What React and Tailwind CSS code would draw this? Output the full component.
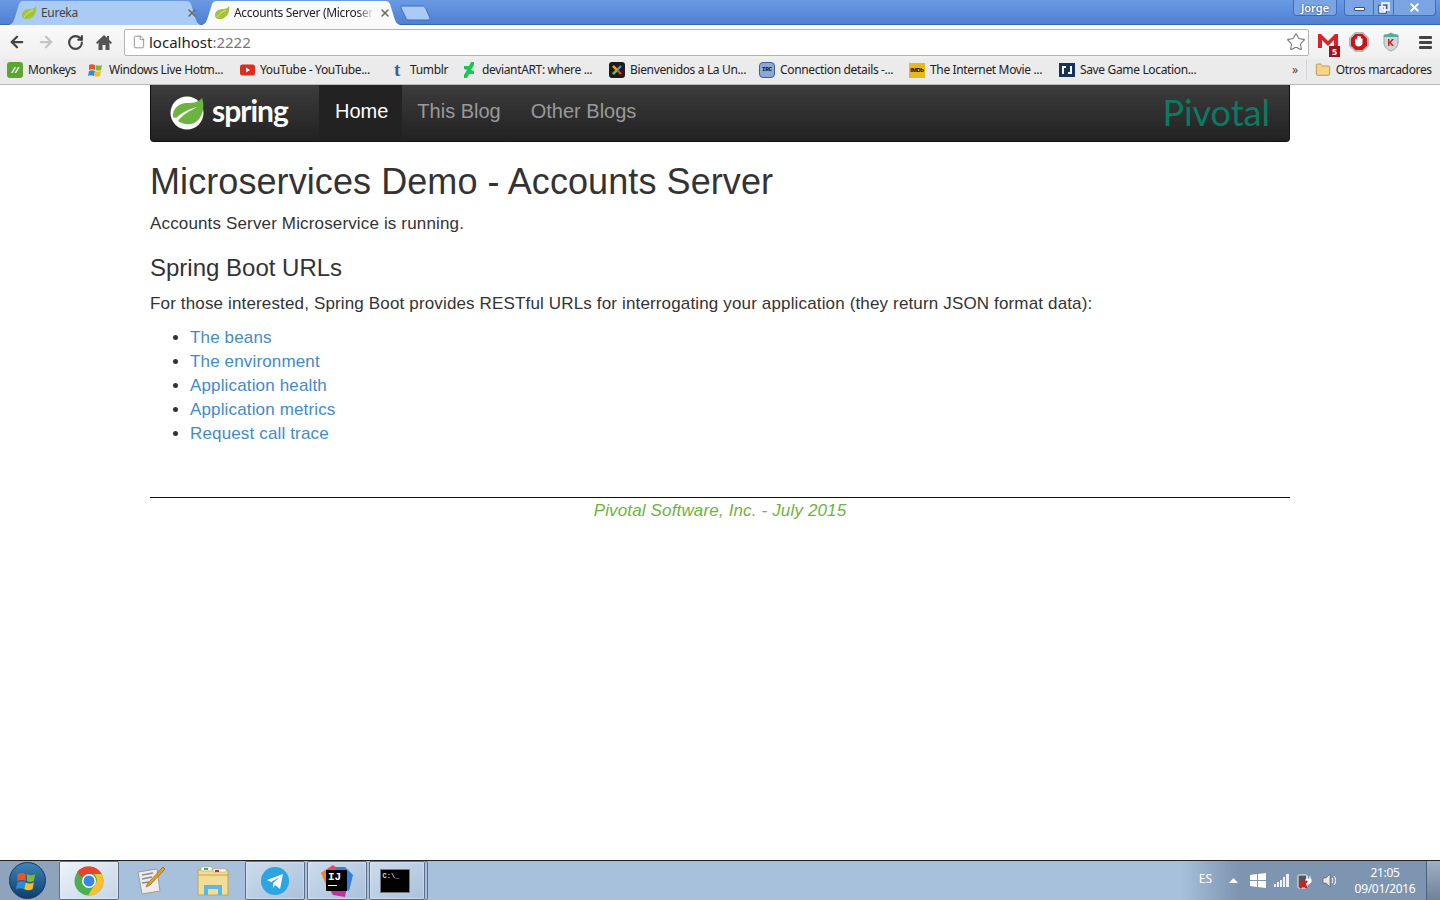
import React from "react";
import { ArrowLeft, ArrowRight, RotateCw, File, Star, X, Folder } from "lucide-react";

const UI = "font-['Noto_Sans','Open_Sans',sans-serif]";

const Leaf = ({ size = 14 }) => (
  <svg width={size + 2} height={size} viewBox="0 0 16 14" className="shrink-0">
    <path d="M1 9C1 5 5 3 9 3c3 0 5-1 6-3 1 5-1 10-5 12-3 2-6 1-8 0C1 11 1 10 1 9z" fill="#a3c43a" />
    <path d="M3 11c2-3 5-5 9-7" stroke="#d9e58a" strokeWidth="1" fill="none" />
  </svg>
);

const TabShape = ({ fill, w }) => (
  <svg className="absolute left-0 top-0" width={w} height="25" viewBox={`0 0 ${w} 25`}>
    <path d={`M0 25c5 0 6-2 8-8l4-13c1-2 2-3 5-3h${w - 34}c3 0 4 1 5 3l4 13c2 6 3 8 8 8z`} fill={fill} />
  </svg>
);

const Tab = ({ active, title, w, className }) => (
  <div className={`relative h-[25px] shrink-0 ${className}`} style={{ width: w }}>
    <TabShape w={w} fill={active ? "#fafafa" : "#a9cbf4"} />
    <div className={`relative flex h-full items-center pl-[14px] text-[12px] tracking-[-0.3px] ${active ? "pr-[11px] text-[#222]" : "pr-[5px] text-[#444]"}`}>
      <Leaf />
      <span className={`ml-[4px] w-[140px] overflow-hidden whitespace-nowrap ${active ? "[mask-image:linear-gradient(to_right,black_88%,transparent)]" : ""}`}>{title}</span>
      <X size={12} strokeWidth={3} className="ml-auto text-[#666]" />
    </div>
  </div>
);

const WinLogo = ({ size = 16 }) => (
  <svg width={size} height={size} viewBox="0 0 16 16">
    <path d="M1 3c2-1 4-1 6 0v5C5 7 3 7 1 8z" fill="#e8552a" />
    <path d="M8 3c2 1 4 1 6 0l-1 5c-2 1-4 1-5 0z" fill="#7fba2b" />
    <path d="M1 9c2-1 4-1 6 0l-1 5c-2-1-4-1-6 0z" fill="#2a8cdb" />
    <path d="M7 9c2 1 4 1 6 0l-1 5c-2 1-4 1-6 0z" fill="#f5c01f" />
  </svg>
);

const marks = {
  monkeys: <div className="flex h-4 w-4 items-center justify-center rounded-[3px] bg-[#5aa631] text-[9px] font-bold italic text-white">//</div>,
  windows: <WinLogo />,
  youtube: (
    <svg width="15" height="12" viewBox="0 0 15 12">
      <rect width="15" height="11" y="0.5" rx="2.5" fill="#e22b1f" />
      <path d="M6 3.5l4 2.5-4 2.5z" fill="#fff" />
    </svg>
  ),
  tumblr: <span className="font-['Liberation_Serif',serif] text-[19px] font-bold leading-4 text-[#38648c]">t</span>,
  deviant: (
    <svg width="11" height="16" viewBox="0 0 11 16">
      <path d="M10 0v3L7 8l3 1v3H5l-2 4H0v-3l3-5-3-1V4h5l2-4z" fill="#18c653" />
    </svg>
  ),
  joomla: (
    <svg width="16" height="16" viewBox="0 0 16 16">
      <rect width="16" height="16" rx="3" fill="#1c1c1c" />
      <path d="M4 4l8 8" stroke="#e8402a" strokeWidth="2.4" />
      <path d="M12 4l-8 8" stroke="#3f9ad6" strokeWidth="2.4" />
      <path d="M4 4l4 4" stroke="#f0a21e" strokeWidth="2.4" />
      <path d="M4 12l4-4" stroke="#7cb82f" strokeWidth="2.4" />
    </svg>
  ),
  irc: <div className="flex h-4 w-4 items-center justify-center rounded-[4px] border border-[#3c5f94] bg-[#8da9d2] font-['Liberation_Mono',monospace] text-[6px] font-bold leading-none text-[#111]">IRC</div>,
  imdb: <div className="flex h-[15px] w-4 items-center justify-center bg-[#e6b91e] font-['Liberation_Sans',sans-serif] text-[6px] font-bold text-black">IMDb</div>,
  save: (
    <svg width="16" height="14" viewBox="0 0 16 14">
      <rect width="16" height="14" fill="#16345c" />
      <path d="M5 3H3v8h2zM11 3h2v8h-2zM5 3h2v2H5zM9 9h2v2H9z" fill="#fff" />
    </svg>
  ),
};

const bookmarks = [
  ["monkeys", "Monkeys", "w-[83px] pl-[7px]"],
  ["windows", "Windows Live Hotm...", "w-[151px]"],
  ["youtube", "YouTube - YouTube...", "w-[150px]"],
  ["tumblr", "Tumblr", "w-[72px]"],
  ["deviant", "deviantART: where ...", "w-[148px]"],
  ["joomla", "Bienvenidos a La Un...", "w-[150px]"],
  ["irc", "Connection details -...", "w-[150px]"],
  ["imdb", "The Internet Movie ...", "w-[150px]"],
  ["save", "Save Game Location...", "w-[150px]"],
];

const links = ["The beans", "The environment", "Application health", "Application metrics", "Request call trace"];

const TaskButton = ({ active, focused, children, className = "" }) => (
  <div className={`flex h-[39px] w-[60px] items-center justify-center ${active ? "rounded-[2px] border border-[#5b6f88] bg-gradient-to-br shadow-[inset_0_0_2px_#fff]" : ""} ${focused ? "from-[#eef3f9] to-[#c5d5e8]" : "from-[#cddbeb] to-[#a9c2de]"} ${className}`}>
    {children}
  </div>
);

export default function App() {
  return (
    <div className={`flex h-screen w-[1440px] flex-col overflow-hidden bg-white ${UI}`}>
      {/* Tab strip */}
      <div className="flex h-[25px] shrink-0 items-start justify-between border-b border-[#3b66ae] bg-gradient-to-b from-[#6a9ae3] to-[#4f80d2]">
        <div className="flex pl-[7px]">
          <Tab title="Eureka" w={196} />
          <Tab active title="Accounts Server (Microser" w={202} className="-ml-[3px]" />
          <svg width="34" height="25" viewBox="0 0 34 25" className="-ml-[3px] shrink-0">
            <path d="M3 6h21c1 0 2 1 3 3l4 9c0 1 0 2-2 2H10c-2 0-3-1-3-2L2 8c0-1 0-2 1-2z" fill="#a9cbf4" stroke="#3f6db8" />
          </svg>
        </div>
        <div className="flex items-start pr-[4px] text-white">
          <div className="flex h-[16px] w-[44px] items-center justify-center rounded-b-[4px] border border-t-0 border-[#3f6db8] bg-[#7ba4e4] pt-[2px] text-[11px] font-semibold [text-shadow:0_0_2px_#234]">Jorge</div>
          <div className="ml-[7px] flex h-[16px] rounded-b-[4px] border border-t-0 border-[#3f6db8] bg-[#7ba4e4]">
            <div className="flex w-[29px] items-center justify-center border-r border-[#3f6db8]">
              <div className="mt-[3px] h-[4px] w-[11px] rounded-[1px] border border-[#33507f] bg-white" />
            </div>
            <div className="flex w-[20px] items-center justify-center border-r border-[#3f6db8]">
              <svg width="12" height="12" viewBox="0 0 12 12" fill="none" stroke="#fff" strokeWidth="1.5">
                <rect x="1" y="3.5" width="7" height="7.5" stroke="#33507f" />
                <rect x="4" y="1" width="7" height="7" />
                <rect x="2" y="4.5" width="5" height="5.5" />
              </svg>
            </div>
            <div className="flex w-[41px] items-center justify-center">
              <X size={13} strokeWidth={3.5} className="text-white" />
            </div>
          </div>
        </div>
      </div>

      {/* Toolbar */}
      <div className="flex h-[34px] shrink-0 items-center bg-gradient-to-b from-[#fafafa] to-[#efefef] pl-[8px]">
        <ArrowLeft size={18} strokeWidth={3} className="text-[#444]" />
        <ArrowRight size={18} strokeWidth={3} className="ml-[11px] text-[#c4c4c4]" />
        <RotateCw size={17} strokeWidth={3} className="ml-[12px] text-[#444]" />
        <svg width="16" height="17" viewBox="0 0 16 17" className="ml-[12px]">
          <path d="M8 1L0 8.500l1 1.500 1.500-1.300V16H6.500v-5h3v5h4V8.700L15 10l1-1.500-3-2.800V2h-2v1.800z" fill="#555" />
        </svg>
        <div className="ml-[12px] flex h-[27px] w-[1185px] items-center rounded-[2px] border border-[#b4b4b4] bg-white pl-[7px] pr-[2px]">
          <File size={14} strokeWidth={1.5} className="text-[#888]" />
          <span className="ml-[3px] text-[15px] text-[#222]">localhost<span className="text-[#777]">:2222</span></span>
          <Star size={20} strokeWidth={1.3} className="ml-auto text-[#777]" />
        </div>
        <div className="relative ml-[9px] h-[20px] w-[22px]">
          <svg width="20" height="16" viewBox="0 0 20 16" className="mt-[2px]">
            <path d="M0 0h3l7 7 7-7h3v14h-4V6l-6 6-6-6v8H0z" fill="#d8232a" />
          </svg>
          <div className="absolute -bottom-[5px] right-0 flex h-[11px] w-[11px] items-center justify-center bg-[#a3121a] text-[9px] font-bold leading-none text-white">5</div>
        </div>
        <svg width="20" height="20" viewBox="0 0 20 20" className="ml-[9px]">
          <path d="M6 0h8l6 6v8l-6 6H6l-6-6V6z" fill="#b8b8b8" />
          <path d="M6.500 2h7L18 6.500v7L13.500 18h-7L2 13.500v-7z" fill="#c8141c" />
          <path d="M6 9c0-2 1-3 1.500-2L8 8V5c0-1 1-1 1 0V4.500c0-1 1.500-1 1.500 0V5c0-1 1.500-1 1.500 0v2c0-1 1.500-1 1.500 0v4c0 2-2 3.500-4 3.500S6 13 6 11z" fill="#fff" />
        </svg>
        <svg width="16" height="20" viewBox="0 0 16 20" className="ml-[14px]">
          <path d="M1 3c3 0 5-1 7-2 2 1 4 2 7 2v8c0 4-4 7-7 8-3-1-7-4-7-8z" fill="#d2d6da" stroke="#8fa7ad" />
          <path d="M1 3c3 0 5-1 7-2 2 1 4 2 7 2v2H1z" fill="#4fb09a" />
          <path d="M5 7h1.500v3L9 7h2l-3 3.500L11 14H9l-2.500-3v3H5z" fill="#c8232a" />
        </svg>
        <div className="ml-[20px] flex w-[13px] flex-col gap-[2px]">
          <div className="h-[3px] rounded-[1px] bg-[#444]" />
          <div className="h-[3px] rounded-[1px] bg-[#444]" />
          <div className="h-[3px] rounded-[1px] bg-[#444]" />
        </div>
      </div>

      {/* Bookmarks bar */}
      <div className="flex h-[26px] shrink-0 items-center border-b border-[#b9b9b9] bg-[#ebebeb] pb-[3px] text-[12px] tracking-[-0.35px] text-[#222]">
        {bookmarks.map(([key, label, width]) => (
          <div key={key} className={`flex shrink-0 items-center gap-[5px] whitespace-nowrap pl-[5px] ${width}`}>
            <span className="flex w-4 shrink-0 justify-center">{marks[key]}</span>
            <span>{label}</span>
          </div>
        ))}
        <span className="ml-[88px] text-[12px] text-[#444]">»</span>
        <div className="ml-[8px] h-[20px] w-px bg-[#d4d4d4]" />
        <Folder size={16} fill="#f4d58a" strokeWidth={1.2} className="ml-[8px] text-[#b08a3c]" />
        <span className="ml-[5px] whitespace-nowrap">Otros marcadores</span>
      </div>

      {/* Page */}
      <main className="min-h-0 flex-1 px-[150px] font-['Liberation_Sans',Arial,sans-serif] text-[17px] tracking-[0.15px] text-[#333]">
        <nav className="flex h-[57px] items-stretch rounded-b-[4px] border border-t-0 border-[#111] bg-gradient-to-b from-[#3c3c3c] to-[#222] tracking-normal">
          <div className="ml-[19px] flex w-[149px] items-center">
            <svg width="36" height="34" viewBox="0 0 36 34" className="shrink-0">
              <circle cx="17" cy="17" r="16.500" fill="#fff" />
              <path d="M3 21C2 13 9 7 17 7c7 0 12-1 15-5 3 8 1 19-6 24-6 4-14 2-18-1 5-7 12-10 19-14-7 2-15 5-21 11-2-1-3 0-3-1z" fill="#6db33f" />
            </svg>
            <span className="ml-[6px] pb-[6px] font-['Lato',sans-serif] text-[30px] leading-none font-bold tracking-[-1px] text-white">spring</span>
          </div>
          <div className="flex items-center bg-[#222] pb-[4px] pl-[16px] pr-[14px] text-[20px] text-white">Home</div>
          <div className="flex items-center px-[15px] pb-[4px] text-[20px] text-[#999]">This Blog</div>
          <div className="flex items-center px-[15px] pb-[4px] text-[20px] text-[#999]">Other Blogs</div>
          <div className="ml-auto flex items-center pb-[2px] pr-[19px] font-['Lato',sans-serif] text-[36px] leading-none text-[#0a7a62]">Pivotal</div>
        </nav>

        <h1 className="mt-[16px] text-[36px] leading-[48px] tracking-[0.08px] text-[#333]">Microservices Demo - Accounts Server</h1>
        <p className="mt-[6px] leading-[24px]">Accounts Server Microservice is running.</p>
        <h3 className="mt-[16px] text-[24px] leading-[32px] tracking-normal">Spring Boot URLs</h3>
        <p className="mt-[8px] leading-[24px]">For those interested, Spring Boot provides RESTful URLs for interrogating your application (they return JSON format data):</p>
        <ul className="mt-[10px] list-disc pl-[40px]">
          {links.map((l) => (
            <li key={l} className="leading-[24px]"><span className="text-[#428bca]">{l}</span></li>
          ))}
        </ul>
        <div className="mt-[51px] border-t border-[#111] pt-[1px] text-center italic leading-[24px] text-[#6db33f]">Pivotal Software, Inc. - July 2015</div>
      </main>

      {/* Taskbar */}
      <div className="flex h-[40px] shrink-0 items-stretch border-t border-[#222] bg-[#a7c0dc] bg-gradient-to-r from-[#a7c0dc] from-[82%] to-[#7d95b0] to-[86%]">
        <div className="flex w-[59px] items-center justify-center bg-[#8ea4bd] pr-[5px]">
          <div className="flex h-[37px] w-[37px] items-center justify-center rounded-full border border-[#16385c] bg-gradient-to-b from-[#3e84b8] to-[#0e3f6f]">
            <WinLogo size={22} />
          </div>
        </div>
        <TaskButton active focused>
          <svg width="30" height="30" viewBox="0 0 30 30">
            <circle cx="15" cy="15" r="14.500" fill="#4caf50" />
            <path d="M15 .5A14.500 14.500 0 0 1 27.500 8H15a7 7 0 0 0-6.500 4L3 6A14.500 14.500 0 0 1 15 .5z" fill="#e8432e" />
            <path d="M27.500 8A14.500 14.500 0 0 1 14 29.500L20.500 19A7 7 0 0 0 20 8z" fill="#fbc02d" />
            <circle cx="15" cy="15" r="7" fill="#fff" />
            <circle cx="15" cy="15" r="5.500" fill="#3f83e8" />
          </svg>
        </TaskButton>
        <TaskButton className="ml-[2px]">
          <svg width="30" height="30" viewBox="0 0 30 30">
            <path d="M2 6l19-3 3 22-18 3z" fill="#ececec" stroke="#a09c8c" />
            <path d="M6 9l11-2M6 13l10-2M6 17l7-1" stroke="#8c8c8c" strokeWidth="1.500" />
            <path d="M27 1l2 2-15 16-4 2 2-4z" fill="#e8a21f" stroke="#8a5a12" strokeWidth=".7" />
          </svg>
        </TaskButton>
        <TaskButton className="ml-[2px]">
          <svg width="32" height="30" viewBox="0 0 32 30">
            <path d="M1 4h30v25H1z" fill="#f2dd94" stroke="#c2a457" />
            <path d="M4 1h11v4H4zM16 3h13v3H16z" fill="#fff" stroke="#c2a457" strokeWidth=".6" />
            <path d="M7 2h4v2H7z" fill="#4aa84a" />
            <path d="M18 4h4v2h-4z" fill="#c8332c" />
            <path d="M1 9h30" stroke="#c2a457" />
            <path d="M7 29V19h18v10h-4v-6H11v6z" fill="#5cb6e6" />
          </svg>
        </TaskButton>
        <TaskButton active className="ml-[2px]">
          <svg width="28" height="28" viewBox="0 0 28 28">
            <circle cx="14" cy="14" r="14" fill="#2ca5e0" />
            <path d="M6 13l16-6-3 15-5-4-2 3v-5l7-6-9 5z" fill="#fff" />
          </svg>
        </TaskButton>
        <TaskButton active className="ml-[2px]">
          <div className="relative h-[32px] w-[32px]">
            <svg width="32" height="32" viewBox="0 0 32 32">
              <path d="M0 8L12 0l8 6-8 10z" fill="#f0416c" />
              <path d="M14 2h10l8 8-4 16-14-6z" fill="#2d7fe0" />
              <path d="M2 12l10 18 12 2 2-10L8 6z" fill="#c42ea0" />
              <path d="M0 8l6-4 6 14-6 4z" fill="#fc801d" />
            </svg>
            <div className="absolute left-[5px] top-[5px] flex h-[21px] w-[21px] flex-col bg-black pl-[2px] pt-[1px] font-['Liberation_Mono',monospace] text-[11px] font-bold leading-[12px] text-white">
              IJ
              <div className="mt-[2px] h-[1px] w-[9px] bg-white" />
            </div>
          </div>
        </TaskButton>
        <TaskButton active className="ml-[2px] !w-[56px] pr-[5px]">
          <div className="h-[24px] w-[30px] border border-[#777] bg-black pl-[2px] pt-[2px] font-['Liberation_Mono',monospace] text-[7px] font-bold leading-[8px] text-[#ddd]">C:\_</div>
        </TaskButton>
        <div className="h-[39px] w-[3px] rounded-r-[2px] border border-l-0 border-[#5b6f88]" />

        <div className="ml-auto flex items-center text-[12px] text-white">
          <span className="mb-[3px]">ES</span>
          <svg width="9" height="5" viewBox="0 0 9 5" className="ml-[17px]"><path d="M4.500 0L9 5H0z" fill="#fff" /></svg>
          <svg width="16" height="15" viewBox="0 0 16 15" className="ml-[12px]" fill="#fff"><path d="M0 2l7-1v6H0zM8 1l8-1v7H8zM0 8h7v6l-7-1zM8 8h8v7l-8-1z" /></svg>
          <svg width="16" height="13" viewBox="0 0 16 13" className="ml-[8px]" fill="#eef2f6"><path d="M0 10h2v3H0zM3 8h2v5H3zM6 6h2v7H6zM9 3h2v10H9zM12 0h3v13h-3z" /></svg>
          <svg width="16" height="16" viewBox="0 0 16 16" className="ml-[7px]">
            <rect x="1" y="2" width="9" height="13" rx="1" fill="#555" stroke="#eee" />
            <path d="M9 6h5v3l-2 2H9zM10 3v3M13 3v3" fill="#fff" stroke="#fff" />
            <path d="M3 8l7 7M10 8l-7 7" stroke="#e01818" strokeWidth="2" />
          </svg>
          <svg width="16" height="15" viewBox="0 0 16 15" className="ml-[9px]" fill="none" stroke="#fff">
            <path d="M1 5h3l4-4v13l-4-4H1z" fill="#e8e8e8" stroke="#555" strokeWidth=".6" />
            <path d="M10 5c1 1 1 4 0 5M12 3c2 2 2 7 0 9" />
          </svg>
          <div className="ml-[17px] flex w-[60px] flex-col items-center pt-[1px] text-[12px] leading-[16px] tracking-[-0.3px]">
            <span>21:05</span>
            <span>09/01/2016</span>
          </div>
          <div className="ml-[11px] h-full w-[14px] border-l border-[#4f6178] bg-gradient-to-b from-[#9fb0c3] to-[#6f8298]" />
        </div>
      </div>
    </div>
  );
}
